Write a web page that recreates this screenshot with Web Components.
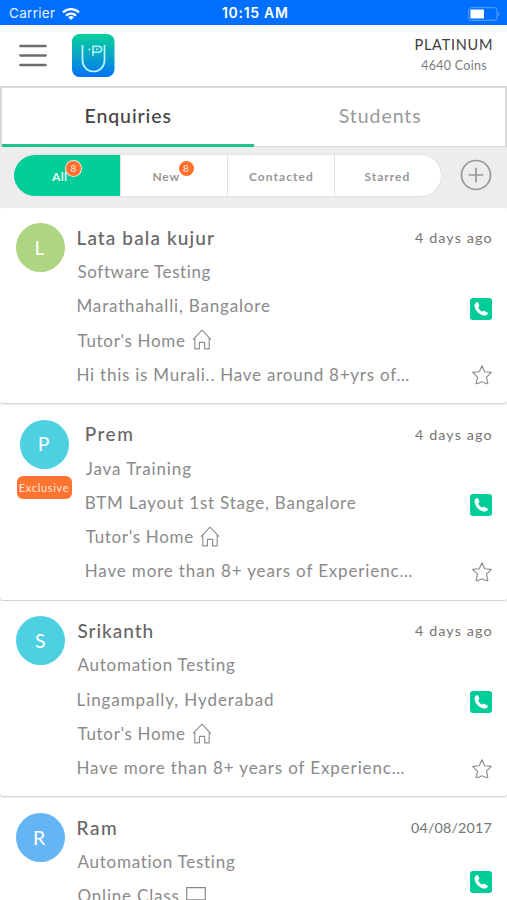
<!DOCTYPE html>
<html lang="en">
<head>
<meta charset="utf-8">
<title>Enquiries</title>
<style>
html,body{margin:0;padding:0;height:900px;overflow:hidden;background:#fff}
body{font-family:Lato,"Open Sans",sans-serif}
</style>
</head>
<body>
<enquiry-app></enquiry-app>
<script>
// Base: renders a static template into an open shadow root.
class Base extends HTMLElement {
  connectedCallback() {
    if (this.shadowRoot) return;
    this.attachShadow({ mode: 'open' }).innerHTML = this.render();
  }
  a(name, fallback = '') { return this.getAttribute(name) ?? fallback; }
}

// Single line of text whose letters are tracked to a given visible width.
const ctx = document.createElement('canvas').getContext('2d');
class TrackedText extends Base {
  render() {
    const text = this.a('text'), size = this.a('size', '17'), weight = this.a('weight', '400');
    const font = this.a('font', 'Lato'), w = +this.a('w', '0');
    ctx.font = `${weight} ${size}px ${font}`;
    const m = ctx.measureText(text);
    const ink = m.actualBoundingBoxLeft + m.actualBoundingBoxRight;
    const ls = w && text.length > 1 ? (w - ink) / (text.length - 1) : 0;
    const left = m.actualBoundingBoxLeft, right = m.actualBoundingBoxRight - m.width - ls;
    return `<style>:host{display:inline-block;white-space:nowrap;color:${this.a('color', '#7b7b7b')};font:${weight} ${size}px/1.2 ${font},sans-serif}
      span{display:inline-block;letter-spacing:${ls.toFixed(3)}px;margin-left:${left.toFixed(2)}px;margin-right:${right.toFixed(2)}px}</style><span>${text}</span>`;
  }
}
customElements.define('tracked-text', TrackedText);

const ICONS = {
  home: [20, 21, '<path d="M1 10.6 10 1.2l9 9.4M2.800 8.800v11h4.600v-6.400h5.200v6.400h4.600v-11" fill="none" stroke="#8f8f8f" stroke-width="1.15" stroke-linejoin="round"/>'],
  screen: [20, 16, '<path d="M.7.7h18.6v12.2H.7zM6 15.3h8" fill="none" stroke="#858585" stroke-width="1.2"/>'],
  star: [22, 22, '<path d="M11 1.7 13.7 7.700l6.700.7-4.9 4.700 1.3 6.500c-2 .6-3.600-1.300-5.800-1.900C8.800 18.300 7.200 20.200 5.200 19.600l1.300-6.500-4.900-4.700 6.700-.7z" fill="none" stroke="#8d8d8d" stroke-width="1.15" stroke-linejoin="round"/>'],
  phone: [22, 22, '<rect width="22" height="22" rx="3" fill="#00cd98"/><path d="M6.3 4.4c.8-.5 1.5-.4 1.9.3l1.1 2.400c.3.6.1 1.1-.4 1.5l-.7.6c.7 1.9 2.300 3.600 4.100 4.600l.8-.7c.5-.4 1-.5 1.500-.2l2.800 1.500c.6.4.6 1 .2 1.600-.8 1.300-2.300 1.900-4 1.500C9 16.600 5.100 12.300 4.500 8c-.2-1.600.5-2.800 1.800-3.600z" fill="#fff"/>'],
  menu: [28, 24, '<path d="M1.300 2h25.400M1.300 11.500h25.400M1.300 21h25.400" stroke="#6e6e6e" stroke-width="2.300" stroke-linecap="round"/>'],
  plus: [32, 32, '<circle cx="16" cy="16" r="14.500" fill="none" stroke="#969696" stroke-width="1.700"/><path d="M8.800 16h14.400M16 8.800v14.400" stroke="#969696" stroke-width="1.700"/>'],
  wifi: [18, 14, '<g fill="none" stroke="#fff" stroke-width="2.200"><path d="M1 5.400a11.500 11.500 0 0 1 16 0M4 8.600a7.300 7.300 0 0 1 10 0"/></g><path d="M9 13 6.200 10.300a4 4 0 0 1 5.600 0z" fill="#fff"/>'],
  battery: [32, 14, '<rect x=".7" y=".7" width="28.200" height="12.600" rx="2.600" fill="none" stroke="#5fa4ff" stroke-width="1"/><rect x="2.400" y="2.400" width="13.600" height="9.200" rx=".8" fill="#fff"/><path d="M30.200 4.800c1.600.8 1.600 3.600 0 4.400z" fill="#5fa4ff"/>'],
  logo: [43, 43, '<defs><linearGradient id="g" x2="0" y2="1"><stop offset="0" stop-color="#04cf9c"/><stop offset=".5" stop-color="#0aa6c6"/><stop offset="1" stop-color="#0072f8"/></linearGradient></defs><rect width="42.500" height="43" rx="7.500" fill="url(#g)"/><path d="M10.500 11v15.500a11 11 0 0 0 22 0V11" fill="none" stroke="#c2f3fa" stroke-width="1.700"/><path d="M21 21.800v-9.600h5.600a3 3 0 0 1 0 6H21M24 15.200h2" fill="none" stroke="#b5f2f2" stroke-width="1.600"/><circle cx="17.300" cy="15.400" r="1" fill="#b5f2f2"/>']
};
class UiIcon extends Base {
  render() {
    const [w, h, body] = ICONS[this.a('name')];
    return `<style>:host{display:block;flex:none;width:${w}px;height:${h}px}svg{display:block}</style><svg width="${w}" height="${h}" viewBox="0 0 ${w} ${h}">${body}</svg>`;
  }
}
customElements.define('ui-icon', UiIcon);

customElements.define('status-bar', class extends Base {
  render() {
    return `<style>:host{display:grid;grid-template-columns:1fr auto 1fr;align-items:center;height:25px;background:#006fff;padding:2px 7px 0 9px;box-sizing:border-box}
      div{display:flex;align-items:center;gap:7px}.r{justify-content:flex-end}</style>
      <div><tracked-text text="Carrier" size="13.500" font="Inter" color="#e8f2ff" w="46"></tracked-text><ui-icon name="wifi"></ui-icon></div>
      <tracked-text text="10:15 AM" size="14" weight="600" font="Inter" color="#fff" w="65"></tracked-text>
      <div class="r"><ui-icon name="battery"></ui-icon></div>`;
  }
});

customElements.define('app-header', class extends Base {
  render() {
    return `<style>:host{display:flex;align-items:center;height:61px;background:#fff;padding:0 15px 0 19px;box-sizing:border-box}
      .logo{margin-left:25px}.plan{margin-left:auto;display:flex;flex-direction:column;align-items:center;gap:4px;padding-bottom:2px}</style>
      <ui-icon name="menu"></ui-icon><ui-icon class="logo" name="logo"></ui-icon>
      <div class="plan"><tracked-text text="PLATINUM" size="14.500" color="#3c3c3c" w="76.500"></tracked-text>
      <tracked-text text="4640 Coins" size="12.500" color="#7c7c7c" w="65"></tracked-text></div>`;
  }
});

customElements.define('main-tabs', class extends Base {
  render() {
    return `<style>:host{display:grid;grid-template-columns:252px 1fr;height:61px;box-sizing:border-box;border:2px solid #d9d9d9;border-width:2px 2px 0;background:#fff}
      div{display:flex;justify-content:center;align-items:center;border-bottom:1px solid #dcdcdc;padding-bottom:3px}
      .on{border-bottom:3px solid #20c290;padding-bottom:1px}</style>
      <div class="on"><tracked-text text="Enquiries" size="19.500" weight="500" color="#444" w="85"></tracked-text></div>
      <div><tracked-text text="Students" size="19.500" color="#999" w="81.500"></tracked-text></div>`;
  }
});

customElements.define('filter-pill', class extends Base {
  render() {
    const on = this.hasAttribute('on');
    return `<style>:host{display:flex;align-items:center;justify-content:center;background:${on ? '#00cd98' : '#fff'};padding-top:3px;padding-right:${this.a('shift', '0')}px;box-sizing:border-box}
      .l{position:relative;display:flex}
      b{position:absolute;left:100%;bottom:100%;margin:0 0 -6px -1px;width:15px;height:15px;border-radius:50%;background:#ff6f2d;${on ? 'box-shadow:0 0 0 1px #ffe5d8;' : ''}color:#ffe9dd;font:400 10px/15px Lato,sans-serif;text-align:center}</style>
      <span class="l"><tracked-text text="${this.a('text')}" size="12" weight="700" color="${on ? '#e6fff7' : '#979797'}" w="${this.a('w')}"></tracked-text>${this.hasAttribute('count') ? `<b>${this.a('count')}</b>` : ''}</span>`;
  }
});

customElements.define('filter-bar', class extends Base {
  render() {
    return `<style>:host{display:flex;align-items:center;justify-content:space-between;height:61px;background:#ededed;padding:0 15px 4px 14px;box-sizing:border-box}
      .g{display:grid;grid-template-columns:repeat(4,1fr);gap:1px;width:428px;height:43px;border-radius:22px;overflow:hidden;background:#e3e3e3;border:1px solid #e3e3e3;border-left:0;box-sizing:border-box}
      ui-icon{margin-top:-2px}</style>
      <div class="g"><filter-pill on text="All" w="16" count="8" shift="16"></filter-pill><filter-pill text="New" w="27" count="8" shift="16"></filter-pill><filter-pill text="Contacted" w="64"></filter-pill><filter-pill text="Starred" w="45" shift="2"></filter-pill></div>
      <ui-icon name="plus"></ui-icon>`;
  }
});

customElements.define('user-avatar', class extends Base {
  render() {
    return `<style>:host{display:flex;flex-direction:column;align-items:center;gap:7px;padding-top:2px;flex:none}
      .c{display:flex;align-items:center;justify-content:center;width:49px;height:49px;border-radius:50%;background:${this.a('color')}}
      .x{display:flex;align-items:center;justify-content:center;width:55.500px;height:23.500px;border-radius:6px;background:#ff7430}</style>
      <div class="c"><tracked-text text="${this.a('letter')}" size="19.500" color="#fff"></tracked-text></div>
      ${this.hasAttribute('exclusive') ? '<div class="x"><tracked-text text="Exclusive" size="11" color="#ffe9dd" w="49"></tracked-text></div>' : ''}`;
  }
});

customElements.define('enquiry-card', class extends Base {
  render() {
    return `<style>:host{display:flex;gap:13px;box-sizing:border-box;height:195.200px;padding:13px 15.500px 11px 15.500px;background:#fff;border-radius:3px;box-shadow:0 1px 2px rgba(0,0,0,.22)}
      :host([wide]){padding-left:16.500px;gap:13.700px}
      .body{flex:1;min-width:0;padding-top:.2px}
      .side{flex:none;display:flex;flex-direction:column;align-items:flex-end;justify-content:space-between}
      .date{height:33px;display:flex;align-items:center}
      .call{padding-top:5px}.star{height:33.500px;display:flex;align-items:center;margin-right:-1px}</style>
      <slot name="avatar"></slot><div class="body"><slot></slot></div>
      <div class="side"><div class="date"><tracked-text text="${this.a('date')}" size="14.300" color="#747474" w="${this.a('dw', '76.500')}"></tracked-text></div>
      <ui-icon class="call" name="phone"></ui-icon><div class="star"><ui-icon name="star"></ui-icon></div></div>`;
  }
});

customElements.define('card-line', class extends Base {
  render() {
    const name = this.hasAttribute('name');
    return `<style>:host{display:flex;align-items:center;gap:7px;height:34.200px}ui-icon{margin-top:-2px}</style>
      <tracked-text text="${this.a('text')}" size="${name ? 19 : 17}" weight="${name ? 500 : 400}" color="${name ? '#666' : '#8a8a8a'}" w="${this.a('w')}"></tracked-text>${this.hasAttribute('icon') ? `<ui-icon name="${this.a('icon')}"></ui-icon>` : ''}`;
  }
});

customElements.define('enquiry-app', class extends Base {
  render() {
    return `<style>:host{display:block;width:507px;height:900px;overflow:hidden;background:#fff}
      .list{display:flex;flex-direction:column;gap:1.400px}
      .short{height:162px}</style>
      <status-bar></status-bar><app-header></app-header><main-tabs></main-tabs><filter-bar></filter-bar>
      <div class="list">
      <enquiry-card date="4 days ago"><user-avatar slot="avatar" letter="L" color="#aed581"></user-avatar>
        <card-line name text="Lata bala kujur" w="136.500"></card-line>
        <card-line text="Software Testing" w="133.500"></card-line>
        <card-line text="Marathahalli, Bangalore" w="192.500"></card-line>
        <card-line text="Tutor's Home" w="107.500" icon="home"></card-line>
        <card-line text="Hi this is Murali.. Have around 8+yrs of…" w="331"></card-line></enquiry-card>
      <enquiry-card wide date="4 days ago"><user-avatar slot="avatar" letter="P" color="#4dd0e1" exclusive></user-avatar>
        <card-line name text="Prem" w="46.500"></card-line>
        <card-line text="Java Training" w="106"></card-line>
        <card-line text="BTM Layout 1st Stage, Bangalore" w="270"></card-line>
        <card-line text="Tutor's Home" w="107.500" icon="home"></card-line>
        <card-line text="Have more than 8+ years of Experienc…" w="326.500"></card-line></enquiry-card>
      <enquiry-card date="4 days ago"><user-avatar slot="avatar" letter="S" color="#4dd0e1"></user-avatar>
        <card-line name text="Srikanth" w="75"></card-line>
        <card-line text="Automation Testing" w="158.500"></card-line>
        <card-line text="Lingampally, Hyderabad" w="195.500"></card-line>
        <card-line text="Tutor's Home" w="107.500" icon="home"></card-line>
        <card-line text="Have more than 8+ years of Experienc…" w="327"></card-line></enquiry-card>
      <enquiry-card class="short" date="04/08/2017" dw="80.500"><user-avatar slot="avatar" letter="R" color="#64b5f6"></user-avatar>
        <card-line name text="Ram" w="38.500"></card-line>
        <card-line text="Automation Testing" w="158.500"></card-line>
        <card-line text="Online Class" w="101" icon="screen"></card-line></enquiry-card>
      </div>`;
  }
});
</script>
</body>
</html>
